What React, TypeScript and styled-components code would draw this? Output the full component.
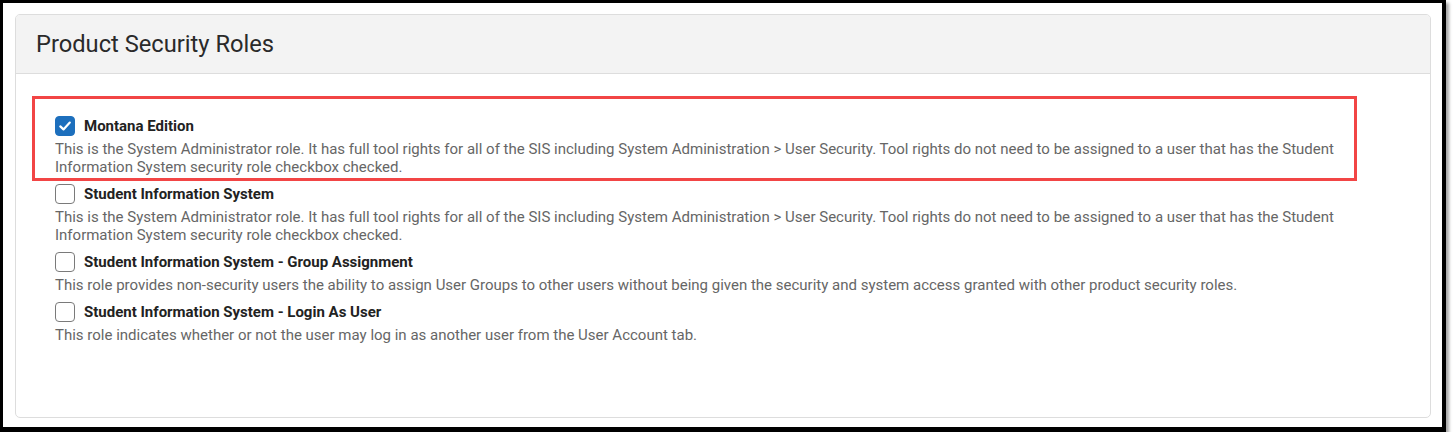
import React from "react";
import styled, { createGlobalStyle } from "styled-components";

const Global = createGlobalStyle`
  html, body { margin: 0; padding: 0; background: #ffffff; }
  body { font-family: Roboto, "Liberation Sans", Arial, sans-serif; }
  * { box-sizing: border-box; }
`;

const Frame = styled.div`
  width: 1446px;
  height: 432px;
  background: #ffffff;
  border-style: solid;
  border-color: #000000;
  border-width: 3px 4px 5px 3px;
  box-shadow: 3px 3px 3px rgba(0, 0, 0, 0.35);
  padding: 11px 11px 9px 12px;
  display: flex;
`;

const Card = styled.section`
  flex: 1;
  display: flex;
  flex-direction: column;
  border: 1px solid #dddddd;
  border-radius: 5px;
  background: #ffffff;
  overflow: hidden;
`;

const Header = styled.header`
  height: 59px;
  background: #f3f3f3;
  border-bottom: 1px solid #dddddd;
  display: flex;
  align-items: center;
  padding: 0 20px;
`;

const Title = styled.h2`
  margin: 0;
  font-size: 23.7px;
  font-weight: 400;
  color: #2a2a2a;
`;

const Body = styled.div`
  padding: 20px 20px;
`;

const List = styled.div`
  display: flex;
  flex-direction: column;
  gap: 6px;
  padding: 20px 19px;
`;

const Item = styled.div`
  position: relative;
  display: flex;
  flex-direction: column;
  gap: 2px;
`;

const Highlight = styled.div`
  position: absolute;
  top: -18px;
  left: -23px;
  width: 1325px;
  bottom: -5px;
  border: 3px solid #f24545;
  pointer-events: none;
`;

const LabelRow = styled.label`
  display: flex;
  align-items: center;
  gap: 9px;
  height: 24px;
  cursor: pointer;
`;

const Box = styled.span<{ $checked: boolean }>`
  width: 20px;
  height: 20px;
  border-radius: 4px;
  flex: none;
  display: flex;
  align-items: center;
  justify-content: center;
  background: ${(p) => (p.$checked ? "#1d6fbd" : "#ffffff")};
  border: ${(p) => (p.$checked ? "1px solid #1d6fbd" : "1px solid #7a7a7a")};
`;

const LabelText = styled.span`
  font-size: 15px;
  font-weight: 700;
  color: #222222;
`;

const Desc = styled.p`
  margin: 0;
  font-size: 15px;
  line-height: 18px;
  color: #666666;
`;

const Check = () => (
  <svg width="14" height="14" viewBox="0 0 14 14" fill="none">
    <path d="M2.3 7.4 L5.5 10.4 L11.8 3.6" stroke="#ffffff" strokeWidth="2.2" strokeLinecap="round" strokeLinejoin="round" />
  </svg>
);

type Role = { name: string; desc: string; checked: boolean; highlight?: boolean };

const sisDesc =
  "This is the System Administrator role. It has full tool rights for all of the SIS including System Administration > User Security. Tool rights do not need to be assigned to a user that has the Student Information System security role checkbox checked.";

const roles: Role[] = [
  { name: "Montana Edition", desc: sisDesc, checked: true, highlight: true },
  { name: "Student Information System", desc: sisDesc, checked: false },
  {
    name: "Student Information System - Group Assignment",
    desc: "This role provides non-security users the ability to assign User Groups to other users without being given the security and system access granted with other product security roles.",
    checked: false,
  },
  {
    name: "Student Information System - Login As User",
    desc: "This role indicates whether or not the user may log in as another user from the User Account tab.",
    checked: false,
  },
];

export default function App() {
  return (
    <>
      <Global />
      <Frame>
        <Card>
          <Header>
            <Title>Product Security Roles</Title>
          </Header>
          <Body>
            <List>
              {roles.map((r) => (
                <Item key={r.name}>
                  {r.highlight && <Highlight />}
                  <LabelRow>
                    <Box $checked={r.checked}>{r.checked && <Check />}</Box>
                    <LabelText>{r.name}</LabelText>
                  </LabelRow>
                  <Desc>{r.desc}</Desc>
                </Item>
              ))}
            </List>
          </Body>
        </Card>
      </Frame>
    </>
  );
}
